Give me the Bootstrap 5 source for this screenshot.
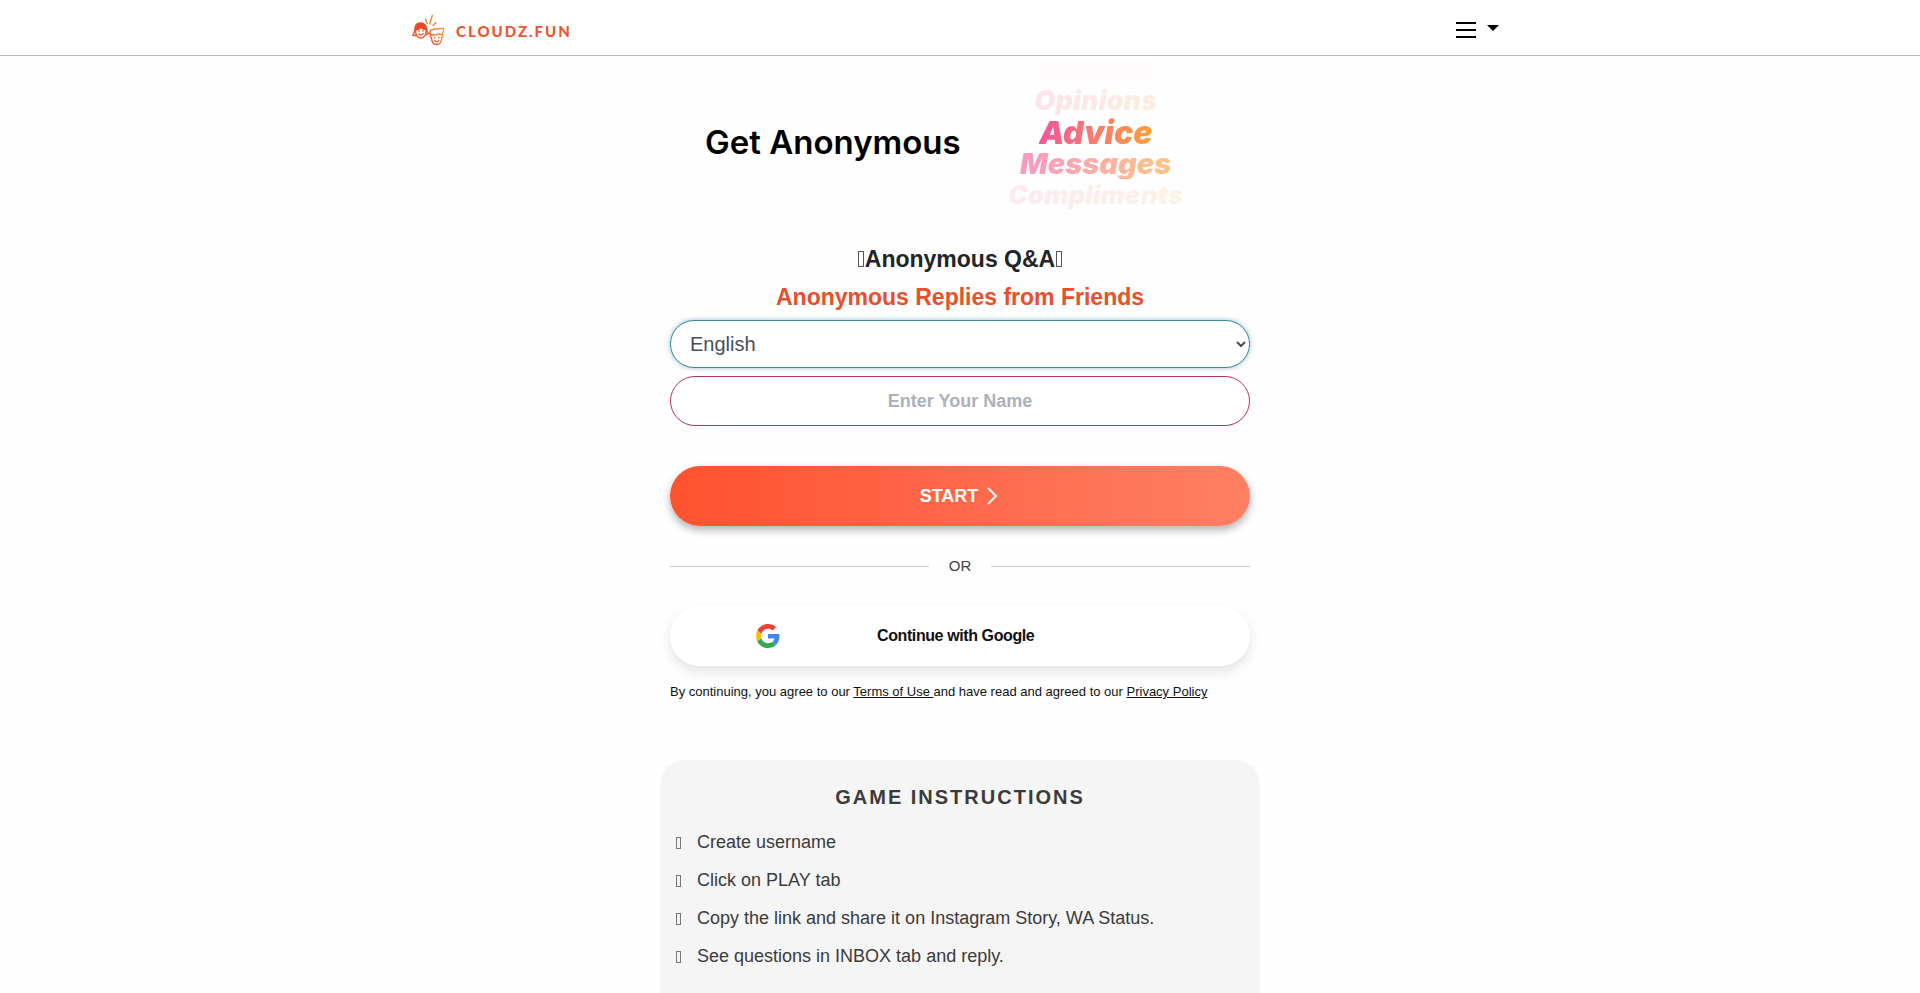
<!DOCTYPE html>
<html lang="en">
<head>
<meta charset="utf-8">
<meta name="viewport" content="width=device-width, initial-scale=1">
<title>Anonymous Q&amp;A</title>
<link href="https://cdn.jsdelivr.net/npm/bootstrap@5.3.0/dist/css/bootstrap.min.css" rel="stylesheet">
<style>
body{font-family:"Liberation Sans",Arial,sans-serif;color:#212529;background:#fefefe}
.topbar{background:#fff;border-bottom:1px solid #bbb;height:56px}
.topbar-inner{max-width:1096px;padding-top:6px}
.brand-name{font:900 15px/24px Lato,sans-serif;letter-spacing:2px;color:#ee5630}
.menu-toggle{color:#000}
.page-col{max-width:600px;padding:0 10px}
.hero{height:184px;padding-left:35px;gap:46px;color:#000}
.hero-title{font:600 33px/40px Inter,sans-serif;padding-top:66px;white-space:nowrap}
.word-wheel{width:178px;font:italic 900 29px/31px Inter,sans-serif}
.word-wheel span{background:linear-gradient(90deg,#f4569c,#ff9f3a);-webkit-background-clip:text;background-clip:text;color:transparent}
.ghost-word{width:112px;height:18px;background:#fffbfc;margin:6px 0 4px}
.word-wheel .w-far{opacity:.16;font-size:27px;line-height:33px}
.word-wheel .w-main{font-size:32px}
.word-wheel .w-next{opacity:.6}
.word-wheel .w-low{opacity:.12;font-size:26px}
.headline{font-size:23px;line-height:30px;font-weight:700;margin-bottom:8px}
.glyph-box{display:inline-block;width:6px;height:16px;margin:0 1px;border:1px solid #555}
.accent{color:#e84f2b}
.lang-select{display:block;width:100%;height:48px;padding:8px 0 8px 15px;font-size:20px;color:#495057;background:#fff;border:1px solid #3f8b9c;border-radius:24px;box-shadow:0 0 5px rgba(79,150,165,.6);outline:0}
.name-input{height:50px;border:1px solid #bd2f5f;border-radius:25px;font-size:18px;font-weight:700;text-align:center}
.name-input::placeholder{color:#adb0be}
.start-btn{height:60px;margin-top:40px;border-radius:30px;color:#fff;font-size:18px;font-weight:700;background:linear-gradient(90deg,#ff512f,#ff8064);box-shadow:0 4px 8px rgba(0,0,0,.3)}
.start-btn:hover{color:#fff}
.divider{margin:30px 0;gap:20px;font-size:15px;line-height:20px;color:#444}
.divider::before,.divider::after{content:"";flex:1;height:1px;background:#ccc}
.google-btn{height:60px;border-radius:30px;background:#fff;font-size:16px;font-weight:700;color:#111;box-shadow:0 6px 12px rgba(50,50,60,.12);padding:0 86px}
.google-btn span{padding-left:97px;letter-spacing:-.025em}
.legal{margin-top:16px;font-size:13px;line-height:20px;color:#111}
.legal a{color:#111}
.panel{max-width:600px;margin-top:58px;background:#f5f5f5;border-radius:25px;padding:22px 16px 64px;color:#3b3b3b}
.panel h2{font-size:20px;line-height:30px;font-weight:700;letter-spacing:2px}
.steps li{font-size:18px;line-height:28px;margin-bottom:10px;display:flex;align-items:center}
.steps li::before{content:"";width:5px;height:12px;border:1px solid #777;margin:2px 16px 0 0}
</style>
</head>
<body>
<header class="topbar">
  <div class="topbar-inner container-fluid h-100 px-0 d-flex align-items-center justify-content-between">
    <a href="#" class="d-flex align-items-center text-decoration-none">
      <svg class="me-2" width="36" height="34" viewBox="1 0 36 34" fill="none" stroke-width="1.4" stroke-linecap="round" stroke-linejoin="round">
        <defs><linearGradient id="warm" x1="0" y1="1" x2="1" y2="0"><stop offset="0" stop-color="#e8432c"/><stop offset="1" stop-color="#f6a13c"/></linearGradient></defs>
        <path d="M4 15C4 9.500 9 7.500 13 10c2 1.200 2.700 3.500 2.600 5.500-2.300 0-4.300-.6-5.600-2-1.500 1.700-3.500 2.400-6 2.500z" fill="#ea4a2a" stroke="#ea4a2a"/>
        <path d="M4 15c-.3 3-.8 4.500-2.300 6 1.400.7 2.600.6 3.800 0M15.600 15c.2 2.500.8 3.800 2.400 4.600-1 .9-2 1.100-3.400.9M4.700 16c-.4 4.500 1.500 8 5 8s5.600-3 5.300-8" stroke="#ec5a2e"/>
        <path d="M8 17v.6m4-.9v.6M7.800 20c1.200 1.700 3.300 1.500 4.300-.3" stroke="#ec5a2e"/>
        <path d="M20.500 21c-1.600-1.300-2-3-1.200-4.200.5-1 1.500-1.300 2.400-1 2-1.800 5-.7 7-1.200 1.500-.3 2.500-.5 4-.2.2 2.300-.4 4-1.700 5.300M21 21c2 .2 5-.2 7-1.200.8.500 1.500 1 3 .7M20.500 21c-1.700-.3-1.700 2.200 0 2.700.2 4 2 6.800 5 6.800 3.300 0 5.300-3 5.300-7 1.600-.8 1.500-3 .2-3" stroke="url(#warm)"/>
        <path d="M23.800 23.500v.6m4-.6v.6M23.700 26.700c1 1.500 3 1.500 4 0" stroke="#ee6a32"/>
        <path d="M14.500 5l1.700 4.500M21.300 1.500l-2.600 8.500M25 8.500l-3 3" stroke="#f0883a"/>
      </svg>
      <span class="brand-name">CLOUDZ.FUN</span>
    </a>
    <button class="menu-toggle btn border-0 p-0 me-1 d-flex align-items-center" type="button" aria-label="Menu">
      <svg width="48" height="24" viewBox="0 0 48 24"><path d="M0 4h20M0 11h20M0 18h20" stroke="#000" stroke-width="2"/><path d="M31 6h12l-6 6z"/></svg>
    </button>
  </div>
</header>
<main>
  <div class="page-col container-fluid">
    <section class="hero d-flex align-items-start">
      <div class="hero-title">Get Anonymous</div>
      <div class="word-wheel d-flex flex-column align-items-center">
        <div class="ghost-word"></div>
        <span class="w-far">Opinions</span>
        <span class="w-main">Advice</span>
        <span class="w-next">Messages</span>
        <span class="w-low">Compliments</span>
      </div>
    </section>
    <form>
      <h1 class="headline text-center mt-1"><span class="glyph-box"></span>Anonymous Q&amp;A<span class="glyph-box"></span></h1>
      <h2 class="headline accent text-center">Anonymous Replies from Friends</h2>
      <select class="lang-select mb-2" aria-label="Language"><option>English</option></select>
      <input class="name-input form-control" type="text" placeholder="Enter Your Name" aria-label="Your name">
      <button class="start-btn btn border-0 w-100 d-flex align-items-center justify-content-center gap-2" type="button">START
        <svg width="14" height="18" viewBox="0 0 14 18" fill="none" stroke="#fff" stroke-width="2"><path d="M2 1l8 8-8 8"/></svg>
      </button>
      <div class="divider d-flex align-items-center">OR</div>
      <button class="google-btn btn border-0 w-100 d-flex align-items-center" type="button">
        <svg width="24" height="24" viewBox="0 0 48 48"><path fill="#EA4335" d="M24 9.5c3.54 0 6.71 1.22 9.21 3.6l6.85-6.85C35.9 2.38 30.47 0 24 0 14.62 0 6.51 5.38 2.56 13.22l7.98 6.19C12.43 13.72 17.74 9.5 24 9.5z"/><path fill="#4285F4" d="M46.98 24.55c0-1.57-.15-3.09-.38-4.55H24v9.02h12.94c-.58 2.96-2.26 5.48-4.78 7.18l7.73 6c4.51-4.18 7.09-10.36 7.09-17.65z"/><path fill="#FBBC05" d="M10.53 28.59c-.48-1.45-.76-2.99-.76-4.59s.27-3.14.76-4.59l-7.98-6.19C.92 16.46 0 20.12 0 24s.92 7.54 2.56 10.78l7.97-6.19z"/><path fill="#34A853" d="M24 48c6.48 0 11.93-2.13 15.89-5.81l-7.73-6c-2.15 1.45-4.92 2.3-8.16 2.3-6.26 0-11.57-4.22-13.47-9.91l-7.98 6.19C6.51 42.62 14.62 48 24 48z"/></svg>
        <span>Continue with Google</span>
      </button>
      <p class="legal mb-0">By continuing, you agree to our <a href="#">Terms of Use </a>and have read and agreed to our <a href="#">Privacy Policy</a></p>
    </form>
  </div>
  <section class="panel container-fluid">
    <h2 class="text-center mb-3">GAME INSTRUCTIONS</h2>
    <ul class="steps list-unstyled mb-0">
      <li>Create username</li>
      <li>Click on PLAY tab</li>
      <li>Copy the link and share it on Instagram Story, WA Status.</li>
      <li>See questions in INBOX tab and reply.</li>
    </ul>
  </section>
</main>
<script src="https://cdn.jsdelivr.net/npm/bootstrap@5.3.0/dist/js/bootstrap.bundle.min.js"></script>
</body>
</html>
